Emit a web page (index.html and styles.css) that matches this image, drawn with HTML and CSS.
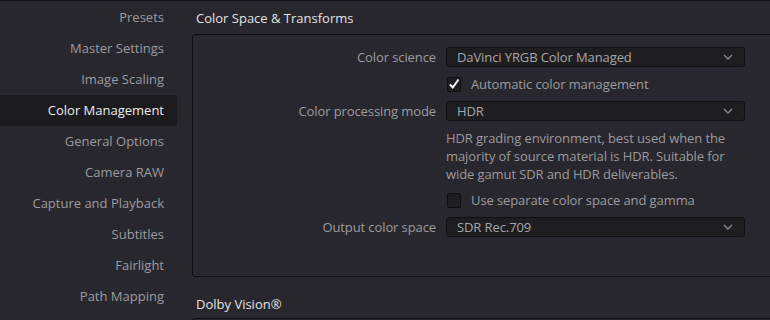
FILE: index.html
```html
<!DOCTYPE html>
<html lang="en">
<head>
    <meta charset="UTF-8">
    <meta name="viewport" content="width=device-width, initial-scale=1.0">
    <title>Project Settings - Color Management</title>
    <link rel="stylesheet" href="styles.css">
</head>
<body>
    <div class="window">
        <ul class="sidebar">
            <li>Presets</li>
            <li>Master Settings</li>
            <li>Image Scaling</li>
            <li class="active">Color Management</li>
            <li>General Options</li>
            <li>Camera RAW</li>
            <li>Capture and Playback</li>
            <li>Subtitles</li>
            <li>Fairlight</li>
            <li>Path Mapping</li>
        </ul>

        <div class="content">
            <h2 class="section-title">Color Space &amp; Transforms</h2>
            <div class="panel">
                <div class="form-grid">
                    <label class="field-label">Color science</label>
                    <div class="select">
                        <span>DaVinci YRGB Color Managed</span>
                        <svg class="chevron" width="10" height="6" viewBox="0 0 10 6"><path d="M1 1 L5 5 L9 1" fill="none" stroke="#8a8a8e" stroke-width="1.4"/></svg>
                    </div>

                    <span></span>
                    <div class="check-row">
                        <span class="checkbox checked">
                            <svg width="12" height="12" viewBox="0 0 12 12"><path d="M2 6.5 L4.8 9.5 L10.5 1.5" fill="none" stroke="#fff" stroke-width="2"/></svg>
                        </span>
                        <span>Automatic color management</span>
                    </div>

                    <label class="field-label">Color processing mode</label>
                    <div class="select">
                        <span>HDR</span>
                        <svg class="chevron" width="10" height="6" viewBox="0 0 10 6"><path d="M1 1 L5 5 L9 1" fill="none" stroke="#8a8a8e" stroke-width="1.4"/></svg>
                    </div>

                    <span></span>
                    <p class="description">HDR grading environment, best used when the majority of source material is HDR. Suitable for wide gamut SDR and HDR deliverables.</p>

                    <span></span>
                    <div class="check-row">
                        <span class="checkbox"></span>
                        <span>Use separate color space and gamma</span>
                    </div>

                    <label class="field-label">Output color space</label>
                    <div class="select">
                        <span>SDR Rec.709</span>
                        <svg class="chevron" width="10" height="6" viewBox="0 0 10 6"><path d="M1 1 L5 5 L9 1" fill="none" stroke="#8a8a8e" stroke-width="1.4"/></svg>
                    </div>
                </div>
            </div>

            <h2 class="section-title second">Dolby Vision&reg;</h2>
            <div class="panel last"></div>
        </div>
    </div>
</body>
</html>
```

FILE: styles.css
```css
body {
    margin: 0;
    padding: 0;
    background-color: #28272d;
    font-family: "Open Sans", "Noto Sans", Arial, sans-serif;
    font-size: 13px;
    overflow: hidden;
}
.window {
    display: flex;
    border-top: 1px solid #111113;
    width: 770px;
    height: 319px;
    overflow: hidden;
}
.sidebar {
    list-style: none;
    margin: 0;
    padding: 1px 0 0 0;
    width: 177px;
    flex-shrink: 0;
}
.sidebar li {
    height: 31px;
    line-height: 31px;
    text-align: right;
    padding-right: 13px;
    color: #9c9ca0;
}
.sidebar li.active {
    background-color: #1b1b1e;
    color: #ececec;
}
.content {
    padding-left: 15px;
    width: 620px;
    flex-shrink: 0;
}
.section-title {
    margin: 0;
    height: 33px;
    line-height: 34px;
    padding-left: 4px;
    font-size: 13px;
    font-weight: normal;
    color: #e2e2e4;
}
.section-title.second {
    height: 41px;
    line-height: 54px;
}
.panel {
    border: 1px solid #0e0e10;
    border-radius: 3px;
    padding: 12px 0 39px 0;
    letter-spacing: -0.1px;
}
.panel.last {
    padding: 0;
    height: 40px;
}
.form-grid {
    display: grid;
    grid-template-columns: 243px 299px;
    column-gap: 10px;
    row-gap: 8px;
}
.field-label {
    text-align: right;
    line-height: 20px;
    color: #9c9ca0;
}
.select {
    height: 18px;
    border: 1px solid #0f0f11;
    border-radius: 3px;
    background-color: #1e1e21;
    display: flex;
    align-items: center;
    justify-content: space-between;
    padding: 0 10px 0 10px;
    color: #a6a6aa;
}
.chevron {
    margin-right: 1px;
}
.check-row {
    display: flex;
    align-items: center;
    height: 18px;
    color: #9c9ca0;
}
.checkbox {
    width: 12px;
    height: 13px;
    border: 1px solid #0f0f11;
    border-radius: 2px;
    background-color: #1e1e21;
    margin: 0 10px 0 1px;
    display: flex;
    align-items: center;
    justify-content: center;
}
.description {
    margin: 0;
    line-height: 18px;
    color: #9a9a9e;
    padding-right: 10px;
}
```
